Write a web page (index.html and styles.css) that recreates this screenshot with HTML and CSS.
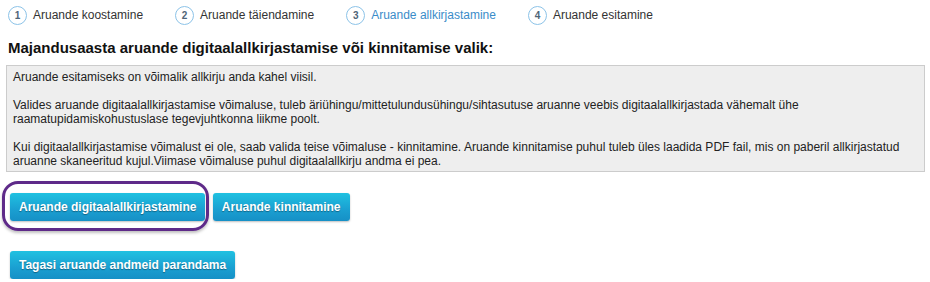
FILE: index.html
```html
<!DOCTYPE html>
<html lang="et">
<head>
  <meta charset="UTF-8">
  <meta name="viewport" content="width=device-width, initial-scale=1.0">
  <title>Aruande allkirjastamine</title>
  <link rel="stylesheet" href="styles.css">
</head>
<body>

  <ol class="steps">
    <li class="step"><span class="step-num">1</span>Aruande koostamine</li>
    <li class="step"><span class="step-num">2</span>Aruande täiendamine</li>
    <li class="step active"><span class="step-num">3</span>Aruande allkirjastamine</li>
    <li class="step"><span class="step-num">4</span>Aruande esitamine</li>
  </ol>

  <h2 class="title">Majandusaasta aruande digitaalallkirjastamise või kinnitamise valik:</h2>

  <div class="info-box">
    <p>Aruande esitamiseks on võimalik allkirju anda kahel viisil.</p>
    <p>Valides aruande digitaalallkirjastamise võimaluse, tuleb äriühingu/mittetulundusühingu/sihtasutuse aruanne veebis digitaalallkirjastada vähemalt ühe raamatupidamiskohustuslase tegevjuhtkonna liikme poolt.</p>
    <p>Kui digitaalallkirjastamise võimalust ei ole, saab valida teise võimaluse - kinnitamine. Aruande kinnitamise puhul tuleb üles laadida PDF fail, mis on paberil allkirjastatud aruanne skaneeritud kujul.Viimase võimaluse puhul digitaalallkirju andma ei pea.</p>
  </div>

  <div class="actions">
    <button class="btn highlighted">Aruande digitaalallkirjastamine</button>
    <button class="btn">Aruande kinnitamine</button>
  </div>

  <div class="actions back">
    <button class="btn">Tagasi aruande andmeid parandama</button>
  </div>

</body>
</html>
```

FILE: styles.css
```css
body {
  font-family: "Liberation Sans", Arial, sans-serif;
  color: #222;
  background-color: #fff;
  margin: 0;
  width: 930px;
}

.steps {
  list-style: none;
  display: flex;
  gap: 32px;
  margin: 0;
  padding: 5px 8px 0;
}

.step {
  display: flex;
  align-items: center;
  font-size: 12px;
  color: #333;
  height: 20px;
}

.step.active {
  color: #3a8cc9;
}

.step-num {
  display: inline-flex;
  justify-content: center;
  align-items: center;
  box-sizing: border-box;
  width: 19px;
  height: 19px;
  margin-right: 6px;
  border: 1.5px solid #8cc3e8;
  border-radius: 50%;
  font-size: 10px;
  font-weight: bold;
  color: #4f6578;
}

.title {
  font-size: 15px;
  font-weight: bold;
  color: #111;
  margin: 14px 8px 0;
  line-height: 17px;
}

.info-box {
  margin: 9px 5px 0 6px;
  padding: 4px 6px 3px;
  background-color: #eee;
  border: 1px solid #ccc;
  font-size: 12px;
  line-height: 14px;
  color: #222;
}

.info-box p {
  margin: 0 0 14px;
}

.info-box p:last-child {
  margin-bottom: 0;
}

.actions {
  margin: 21px 0 0 10px;
}

.actions.back {
  margin-top: 30px;
}

.btn {
  font-family: "Liberation Sans", Arial, sans-serif;
  font-size: 12px;
  font-weight: bold;
  color: #fff;
  text-shadow: 0 1px 1px rgba(0, 0, 0, 0.35);
  height: 28px;
  padding: 0 9px;
  margin-right: 3px;
  border: none;
  border-radius: 3px;
  background: linear-gradient(to bottom, #20c1e1 0%, #1a9fd1 60%, #1690c6 100%);
  box-shadow: 0 1px 2px rgba(0, 0, 0, 0.25);
  cursor: pointer;
  position: relative;
}

.btn:hover {
  background: linear-gradient(to bottom, #1aaed0, #1580b5);
}

/* annotation ring around the suggested choice */
.btn.highlighted::after {
  content: "";
  position: absolute;
  left: -8px;
  top: -12px;
  right: -4px;
  bottom: -10px;
  border: 3px solid #5e2a89;
  border-radius: 16px;
  box-shadow: 0 2px 3px rgba(0, 0, 0, 0.25);
}
```
